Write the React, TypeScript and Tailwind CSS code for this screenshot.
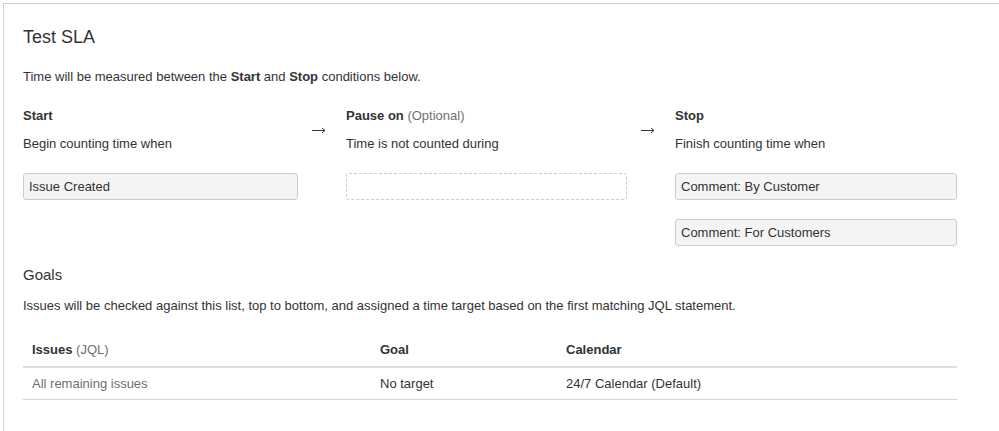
import { type ReactNode } from "react";

const font = { fontFamily: '"Liberation Sans", Arial, sans-serif' };

function Condition({ value, dashed }: { value?: string; dashed?: boolean }) {
  if (dashed) {
    return <div className="h-[27px] rounded-[3px] border border-dashed border-[#cccccc] bg-white" />;
  }
  return (
    <div className="flex h-[27px] items-center rounded-[3px] border border-[#cccccc] bg-[#f4f4f4] px-[5px] text-[13px] text-[#333333]">
      {value}
    </div>
  );
}

function Column({
  width,
  title,
  subtitle,
  children,
}: {
  width: string;
  title: ReactNode;
  subtitle: string;
  children: ReactNode;
}) {
  return (
    <div className={width}>
      <div className="h-[18px] text-[13px] leading-[18px] text-[#333333]">{title}</div>
      <div className="mt-[10px] h-[18px] text-[13px] leading-[18px] text-[#333333]">{subtitle}</div>
      <div className="mt-[20px] flex flex-col gap-[19px]">{children}</div>
    </div>
  );
}

function Arrow() {
  return (
    <div className="flex w-[48px] justify-center pl-[-4px] pt-[20px]">
      <svg width="14" height="7" viewBox="0 0 14 7" className="mr-[6px]">
        <path d="M0 3.5H12.5" stroke="#333333" strokeWidth="1" />
        <path d="M10 1L13 3.5L10 6" stroke="#333333" strokeWidth="1" fill="none" />
      </svg>
    </div>
  );
}

export default function App() {
  return (
    <div className="h-[431px] w-[999px] bg-white pl-[3px] pt-[3px]" style={font}>
      <div className="h-full border-l border-t border-[#d2d2d2] pl-[19px] pt-[21px]">
        <h1 className="h-[24px] text-[18px] leading-[24px] text-[#333333]">Test SLA</h1>

        <p className="mt-[19px] h-[18px] text-[13px] leading-[18px] text-[#333333]">
          Time will be measured between the <b>Start</b> and <b>Stop</b> conditions below.
        </p>

        <div className="mt-[21px] flex w-[934px]">
          <Column width="w-[275px]" title={<b>Start</b>} subtitle="Begin counting time when">
            <Condition value="Issue Created" />
          </Column>
          <Arrow />
          <Column
            width="w-[281px]"
            title={
              <>
                <b>Pause on</b> <span className="text-[#707070]">(Optional)</span>
              </>
            }
            subtitle="Time is not counted during"
          >
            <Condition dashed />
          </Column>
          <Arrow />
          <Column width="w-[282px]" title={<b>Stop</b>} subtitle="Finish counting time when">
            <Condition value="Comment: By Customer" />
            <Condition value="Comment: For Customers" />
          </Column>
        </div>

        <h2 className="mt-[19px] h-[20px] text-[15px] leading-[20px] text-[#333333]">Goals</h2>
        <p className="mt-[12px] h-[18px] text-[13px] leading-[18px] text-[#333333]">
          Issues will be checked against this list, top to bottom, and assigned a time target based on the first
          matching JQL statement.
        </p>

        <table className="mt-[18px] w-[934px] border-collapse text-left text-[13px]">
          <thead>
            <tr className="h-[34px] border-b-2 border-[#dfdfdf]">
              <th className="w-[348px] pl-[9px] font-bold text-[#333333]">
                Issues <span className="font-normal text-[#707070]">(JQL)</span>
              </th>
              <th className="w-[186px] pl-[9px] font-bold text-[#333333]">Goal</th>
              <th className="pl-[9px] font-bold text-[#333333]">Calendar</th>
            </tr>
          </thead>
          <tbody>
            <tr className="h-[32px] border-b border-[#d6d6d6]">
              <td className="pl-[9px] text-[#707070]">All remaining issues</td>
              <td className="pl-[9px] text-[#333333]">No target</td>
              <td className="pl-[9px] text-[#333333]">24/7 Calendar (Default)</td>
            </tr>
          </tbody>
        </table>
      </div>
    </div>
  );
}
